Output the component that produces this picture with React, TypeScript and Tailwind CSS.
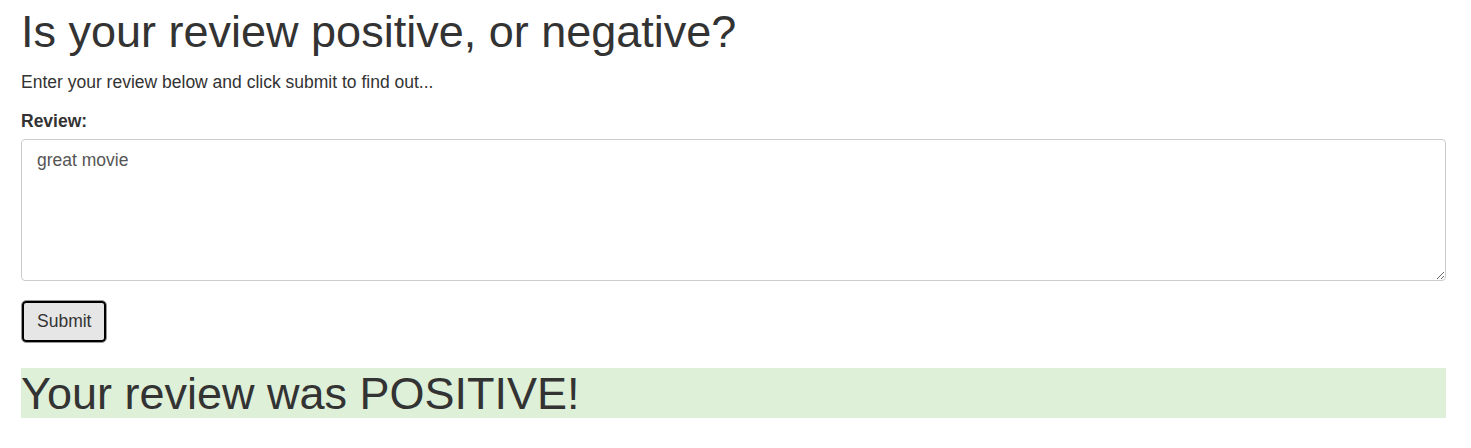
import React from "react";

export default function App() {
  return (
    <div className="min-h-screen bg-white pl-[21px] pr-[25px] text-[#333333]" style={{ fontFamily: '"Liberation Sans", Arial, sans-serif' }}>
      <h1 className="pt-[7px] text-[45px] leading-[50px]">Is your review positive, or negative?</h1>
      <p className="mt-[13px] text-[17.5px] leading-[25px]">Enter your review below and click submit to find out...</p>
      <form className="mt-[14px]">
        <label htmlFor="review" className="block text-[17.5px] font-bold leading-[25px]">
          Review:
        </label>
        <textarea
          id="review"
          defaultValue="great movie"
          className="mt-[5px] block h-[142px] w-full rounded-[4px] border border-[#cccccc] px-[15px] py-[7.5px] text-[17.5px] leading-[25px] text-[#555555] outline-none"
        />
        <button
          type="button"
          className="mt-[19px] block h-[43px] rounded-[5px] border border-[#999999] bg-[#e6e6e6] px-[15px] text-[17.5px] leading-[25px] text-[#333333] shadow-[inset_0_0_0_2px_#000000]"
        >
          Submit
        </button>
      </form>
      <div className="mt-[25px] bg-[#dff0d8] pt-[3px] pb-[0.5px] text-[45px] leading-[46px]">Your review was POSITIVE!</div>
    </div>
  );
}
